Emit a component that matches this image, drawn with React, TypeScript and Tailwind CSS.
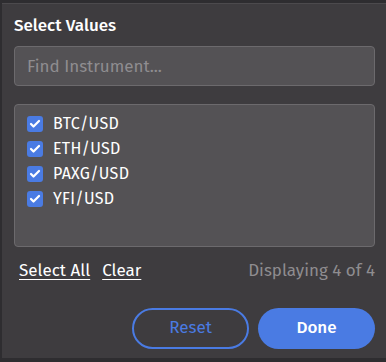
import { Check } from "lucide-react";

const items = ["BTC/USD", "ETH/USD", "PAXG/USD", "YFI/USD"];

export default function App() {
  return (
    <div
      className="w-[386px] h-[362px] bg-[#2e2d30] pt-[3px] pb-[4px] pl-[2px]"
      style={{ fontFamily: '"Fira Sans", "Open Sans", sans-serif' }}
    >
      <div className="h-full bg-[#3e3c3f] border-t border-[#4c4a4d] flex flex-col px-[12px] pr-[11px]">
        <h2 className="text-[17px] font-medium text-white mt-[12px] leading-5">
          Select Values
        </h2>
        <input
          className="mt-[10px] h-[40px] w-full rounded-[4px] border border-[#6c6a6d] bg-[#545255] px-[12px] text-[17px] text-white placeholder:text-[#8f8d90] outline-none"
          placeholder="Find Instrument..."
        />
        <div className="mt-[18px] h-[143px] rounded-[4px] border border-[#6c6a6d] bg-[#545255] pl-[12px] pt-[9px] flex flex-col gap-[5px]">
          {items.map((item) => (
            <label key={item} className="flex items-center gap-[10px] h-[20px]">
              <span className="w-[16px] h-[16px] rounded-[3px] bg-[#4a7be3] flex items-center justify-center">
                <Check className="w-[12px] h-[12px] text-white" strokeWidth={4.5} />
              </span>
              <span className="text-[16px] text-white tracking-[0.3px]">{item}</span>
            </label>
          ))}
        </div>
        <div className="mt-[11px] flex items-center justify-between pl-[5px] text-[17px]">
          <div className="flex gap-[12px] text-white">
            <span className="underline underline-offset-[3px]">Select All</span>
            <span className="underline underline-offset-[3px]">Clear</span>
          </div>
          <span className="text-[#8f8d90]">Displaying 4 of 4</span>
        </div>
        <div className="mt-[24px] flex justify-end gap-[9px]">
          <button className="w-[117px] h-[41px] rounded-full border-2 border-[#4a7be3] text-[#4a7be3] text-[17px]">
            Reset
          </button>
          <button className="w-[117px] h-[41px] rounded-full bg-[#4a7be3] text-white text-[17px] font-medium">
            Done
          </button>
        </div>
      </div>
    </div>
  );
}
